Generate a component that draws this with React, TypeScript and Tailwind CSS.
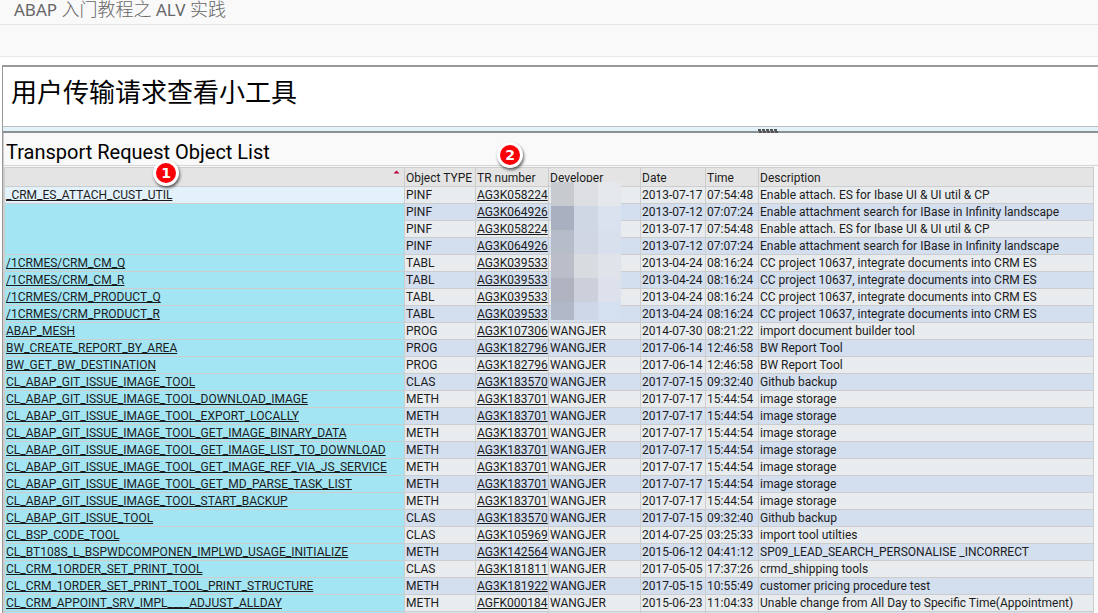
type TransportObject = {
  name?: string;
  span?: number;
  type: string;
  request: string;
  developer: string;
  date: string;
  time: string;
  description: string;
};

const row = (
  name: string | undefined,
  type: string,
  request: string,
  developer: string,
  date: string,
  time: string,
  description: string,
  span?: number,
): TransportObject => ({ name, type, request, developer, date, time, description, span });

const ES_UTIL = "Enable attach. ES for Ibase UI & UI util & CP";
const ES_SEARCH = "Enable attachment search for IBase in Infinity landscape";
const CC_PROJECT = "CC project 10637, integrate documents into CRM ES";

const objects: TransportObject[] = [
  row("_CRM_ES_ATTACH_CUST_UTIL", "PINF", "AG3K058224", "", "2013-07-17", "07:54:48", ES_UTIL),
  row("", "PINF", "AG3K064926", "", "2013-07-12", "07:07:24", ES_SEARCH, 3),
  row(undefined, "PINF", "AG3K058224", "", "2013-07-17", "07:54:48", ES_UTIL),
  row(undefined, "PINF", "AG3K064926", "", "2013-07-12", "07:07:24", ES_SEARCH),
  row("/1CRMES/CRM_CM_Q", "TABL", "AG3K039533", "", "2013-04-24", "08:16:24", CC_PROJECT),
  row("/1CRMES/CRM_CM_R", "TABL", "AG3K039533", "", "2013-04-24", "08:16:24", CC_PROJECT),
  row("/1CRMES/CRM_PRODUCT_Q", "TABL", "AG3K039533", "", "2013-04-24", "08:16:24", CC_PROJECT),
  row("/1CRMES/CRM_PRODUCT_R", "TABL", "AG3K039533", "", "2013-04-24", "08:16:24", CC_PROJECT),
  row("ABAP_MESH", "PROG", "AG3K107306", "WANGJER", "2014-07-30", "08:21:22", "import document builder tool"),
  row("BW_CREATE_REPORT_BY_AREA", "PROG", "AG3K182796", "WANGJER", "2017-06-14", "12:46:58", "BW Report Tool"),
  row("BW_GET_BW_DESTINATION", "PROG", "AG3K182796", "WANGJER", "2017-06-14", "12:46:58", "BW Report Tool"),
  row("CL_ABAP_GIT_ISSUE_IMAGE_TOOL", "CLAS", "AG3K183570", "WANGJER", "2017-07-15", "09:32:40", "Github backup"),
  row("CL_ABAP_GIT_ISSUE_IMAGE_TOOL_DOWNLOAD_IMAGE", "METH", "AG3K183701", "WANGJER", "2017-07-17", "15:44:54", "image storage"),
  row("CL_ABAP_GIT_ISSUE_IMAGE_TOOL_EXPORT_LOCALLY", "METH", "AG3K183701", "WANGJER", "2017-07-17", "15:44:54", "image storage"),
  row("CL_ABAP_GIT_ISSUE_IMAGE_TOOL_GET_IMAGE_BINARY_DATA", "METH", "AG3K183701", "WANGJER", "2017-07-17", "15:44:54", "image storage"),
  row("CL_ABAP_GIT_ISSUE_IMAGE_TOOL_GET_IMAGE_LIST_TO_DOWNLOAD", "METH", "AG3K183701", "WANGJER", "2017-07-17", "15:44:54", "image storage"),
  row("CL_ABAP_GIT_ISSUE_IMAGE_TOOL_GET_IMAGE_REF_VIA_JS_SERVICE", "METH", "AG3K183701", "WANGJER", "2017-07-17", "15:44:54", "image storage"),
  row("CL_ABAP_GIT_ISSUE_IMAGE_TOOL_GET_MD_PARSE_TASK_LIST", "METH", "AG3K183701", "WANGJER", "2017-07-17", "15:44:54", "image storage"),
  row("CL_ABAP_GIT_ISSUE_IMAGE_TOOL_START_BACKUP", "METH", "AG3K183701", "WANGJER", "2017-07-17", "15:44:54", "image storage"),
  row("CL_ABAP_GIT_ISSUE_TOOL", "CLAS", "AG3K183570", "WANGJER", "2017-07-15", "09:32:40", "Github backup"),
  row("CL_BSP_CODE_TOOL", "CLAS", "AG3K105969", "WANGJER", "2014-07-25", "03:25:33", "import tool utilties"),
  row("CL_BT108S_L_BSPWDCOMPONEN_IMPLWD_USAGE_INITIALIZE", "METH", "AG3K142564", "WANGJER", "2015-06-12", "04:41:12", "SP09_LEAD_SEARCH_PERSONALISE _INCORRECT"),
  row("CL_CRM_1ORDER_SET_PRINT_TOOL", "CLAS", "AG3K181811", "WANGJER", "2017-05-05", "17:37:26", "crmd_shipping tools"),
  row("CL_CRM_1ORDER_SET_PRINT_TOOL_PRINT_STRUCTURE", "METH", "AG3K181922", "WANGJER", "2017-05-15", "10:55:49", "customer pricing procedure test"),
  row("CL_CRM_APPOINT_SRV_IMPL____ADJUST_ALLDAY", "METH", "AGFK000184", "WANGJER", "2015-06-23", "11:04:33", "Unable change from All Day to Specific Time(Appointment)"),
  row("", "", "", "", "", "", ""),
];

// Mosaic tiles covering the developer names of the first eight rows
const mosaic = [
  "bg-[#c7cbcf]", "bg-[#dddee2]", "bg-[#e4e7eb]",
  "bg-[#a9b0bf]", "bg-[#cfd6e4]", "bg-[#dae2f0]",
  "bg-[#b7bcc9]", "bg-[#d0d6e3]", "bg-[#d8e0ee]",
  "bg-[#bbbec9]", "bg-[#d8dbdf]", "bg-[#e0e4ea]",
  "bg-[#afb4c0]", "bg-[#ccd0da]", "bg-[#dce1eb]",
  "bg-[#b1b8c7]", "bg-[#cdd7e8]", "bg-[#d4dff0]",
];

const cell = "h-[17px] overflow-hidden border-r border-b border-[#cdcdcd] p-0 pl-px leading-4 whitespace-nowrap";
const head = "relative h-[19px] border-r border-b border-[#cdcdcd] p-0 pt-0.5 pl-px text-left font-normal leading-4 whitespace-nowrap";
const link = "underline decoration-1 underline-offset-1 [text-decoration-skip-ink:none]";

function Badge({ label, className }: { label: string; className: string }) {
  return (
    <span
      className={`absolute z-10 flex size-[26px] items-center justify-center rounded-full border-3 border-white bg-[#fb0007] font-['DejaVu_Sans',sans-serif] text-sm font-bold leading-none text-white shadow-[1px_2px_3px_rgba(0,0,0,0.6)] ${className}`}
    >
      {label}
    </span>
  );
}

function Mosaic() {
  return (
    <div aria-hidden className="absolute top-3.5 left-0.5 z-10 grid h-[138px] w-[70px] grid-cols-3 grid-rows-[24px_24px_24px_24px_24px_18px]">
      {mosaic.map((color, i) => (
        <span key={i} className={color} />
      ))}
    </div>
  );
}

function ObjectTable() {
  return (
    <table className="w-full table-fixed border-separate border-spacing-0 border-t border-l border-[#cdcdcd] text-xs">
      <colgroup>
        <col className="w-[400px]" />
        <col className="w-[71px]" />
        <col className="w-[73px]" />
        <col className="w-[92px]" />
        <col className="w-[65px]" />
        <col className="w-[53px]" />
        <col />
      </colgroup>
      <thead className="bg-[#e4e4e4]">
        <tr>
          <th className={head} aria-label="Object name">
            <Badge label="1" className="top-[-8px] left-[148px]" />
            <svg className="absolute top-0.5 right-1" width="7" height="4" viewBox="0 0 7 4" aria-hidden>
              <path d="M3.5 0.5 6.5 3.5H0.5Z" fill="#b8003a" />
            </svg>
          </th>
          <th className={head}>Object TYPE</th>
          <th className={head}>
            TR number
            <Badge label="2" className="top-[-26px] left-[21px]" />
          </th>
          <th className={head}>
            Developer
            <Mosaic />
          </th>
          <th className={head}>Date</th>
          <th className={head}>Time</th>
          <th className={head}>Description</th>
        </tr>
      </thead>
      <tbody>
        {objects.map((o, i) => (
          <tr key={i} className="bg-[#e8ecef] even:bg-[#d3deef]">
            {o.name !== undefined && (
              <td rowSpan={o.span} className={`${cell} ${i === 0 ? "bg-[#e3f1fa]" : "bg-[#a4e5f4]"}`}>
                {o.name && (
                  <a href="#" className={link}>
                    {o.name}
                  </a>
                )}
              </td>
            )}
            <td className={cell}>{o.type}</td>
            <td className={cell}>
              {o.request && (
                <a href="#" className={link}>
                  {o.request}
                </a>
              )}
            </td>
            <td className={cell}>{o.developer}</td>
            <td className={cell}>{o.date}</td>
            <td className={cell}>{o.time}</td>
            <td className={cell}>{o.description}</td>
          </tr>
        ))}
      </tbody>
    </table>
  );
}

export default function App() {
  return (
    <div className="flex h-screen flex-col overflow-hidden bg-white font-['Roboto','Noto_Sans_CJK_SC',sans-serif] text-[#1c1c1c]">
      <header className="h-[25px] shrink-0 border-b border-[#e4e4e4] bg-[#f9f9f9] pl-3.5 font-['Noto_Sans','Noto_Sans_CJK_SC',sans-serif] text-[17px] leading-[18px] text-[#666]">
        ABAP <span className="text-lg leading-[18px] font-light">入门教程之</span> ALV{" "}
        <span className="text-lg leading-[18px] font-light">实践</span>
      </header>
      <div className="mb-2 h-8 shrink-0 border-b border-[#e9e9e9] bg-[#f9f9f9]" />

      <main className="ml-0.5 flex min-h-0 flex-1 flex-col border-t-2 border-l border-[#999]">
        <section className="h-[59px] shrink-0 pl-2">
          <h1 className="font-['Noto_Sans_CJK_SC',sans-serif] text-[26px] leading-[48px] text-black">用户传输请求查看小工具</h1>
        </section>

        <div className="relative h-[7px] shrink-0 border-t border-b-2 border-t-[#bdbdbd] border-b-[#8a8f94] bg-[#e3f1f9]">
          <svg className="absolute top-0.5 left-[755px]" width="20" height="4" viewBox="0 0 20 4" aria-hidden>
            <path d="M0 0h3v2h1v2H1V2H0ZM4 0h3v2h1v2H5V2H4ZM8 0h3v2h1v2H9V2H8ZM12 0h3v2h1v2h-3V2h-1ZM16 0h3v2h1v2h-3V2h-1Z" fill="#555" />
          </svg>
        </div>

        <section className="min-h-0 flex-1 border-l border-[#cdcdcd] bg-[#f9f9f9]">
          <h2 className="mb-px h-[33px] border-b border-[#d4d4d4] pl-0.5 text-xl leading-[38px] text-black">
            Transport Request Object List
          </h2>
          <div className="pr-1">
            <ObjectTable />
          </div>
        </section>
      </main>
    </div>
  );
}
